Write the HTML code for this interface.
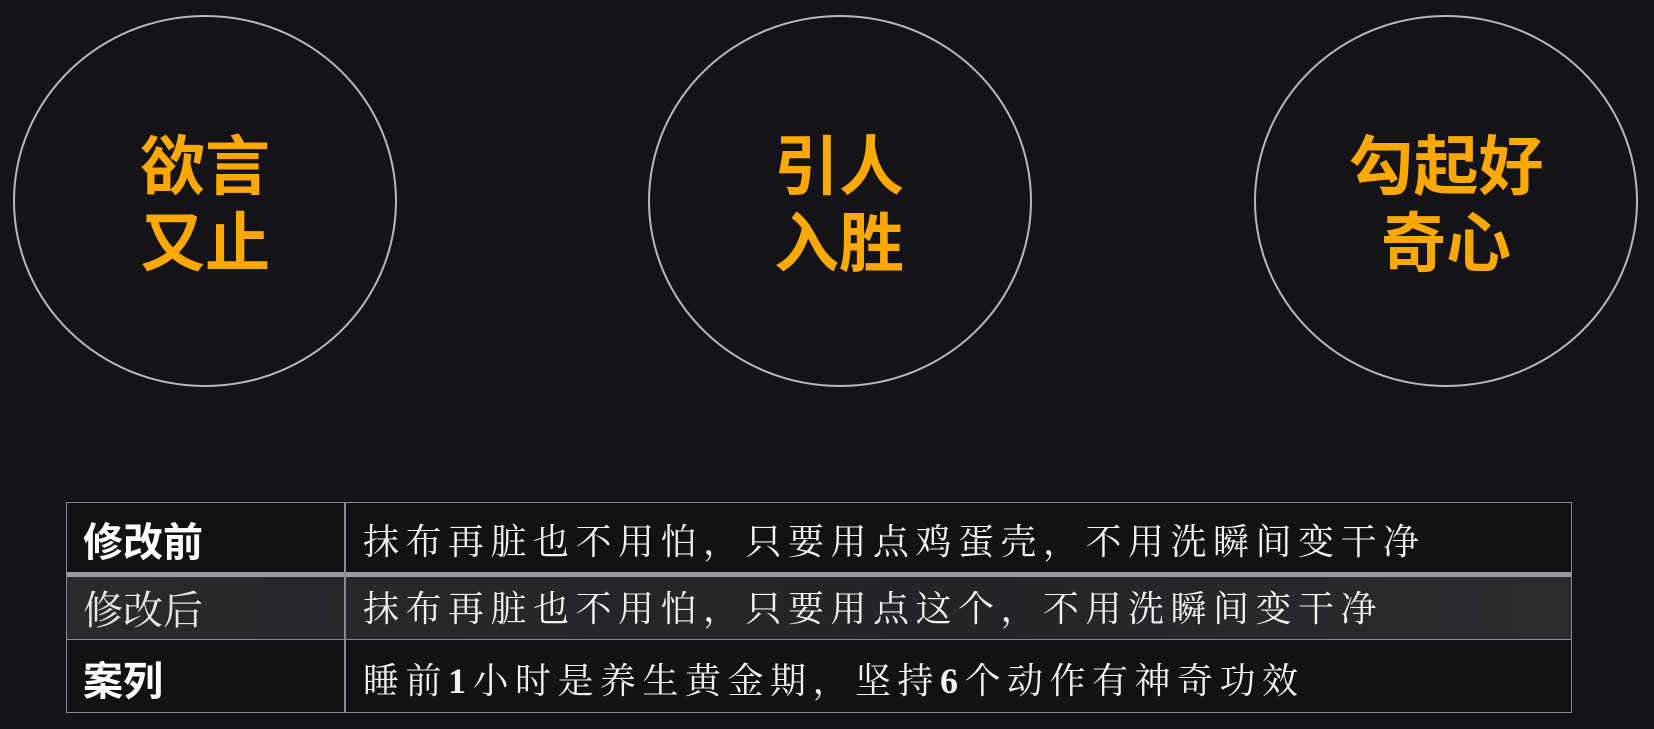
<!DOCTYPE html>
<html><head><meta charset="utf-8">
<style>
html,body{margin:0;padding:0}
body{width:1654px;height:729px;overflow:hidden;background:#141317;position:relative;font-family:"Liberation Sans","Noto Sans CJK SC",sans-serif}
.c{position:absolute;top:15px;width:384px;height:372px;border:2px solid #b8b8bd;border-radius:50%;box-sizing:border-box}
.t{position:absolute;top:128px;width:300px;text-align:center;color:#FBA800;font-weight:700;font-size:65px;line-height:77px;font-family:"Liberation Sans","Noto Sans CJK SC",sans-serif}
.tbl{position:absolute;left:66px;top:502px;width:1506px;height:211px;border:1.5px solid #8a8a8e;box-sizing:border-box}
.row{position:absolute;left:0;width:100%;box-sizing:border-box}
.l{position:absolute;left:16px;color:#fff;font-size:40px;font-weight:700;font-family:"Liberation Sans","Noto Sans CJK SC",sans-serif}
.r{position:absolute;left:296px;color:#f2f2f2;font-size:36px;letter-spacing:6.5px;white-space:nowrap;font-family:"Liberation Serif","Noto Serif CJK SC",serif}
.div{position:absolute;left:277px;top:0;bottom:0;width:1.5px;background:#8a8a8e}
</style></head><body>
<div class="c" style="left:13px"></div>
<div class="c" style="left:648px"></div>
<div class="c" style="left:1254px"></div>
<div class="t" style="left:55px">欲言<br>又止</div>
<div class="t" style="left:689px">引人<br>入胜</div>
<div class="t" style="left:1296px">勾起好<br>奇心</div>

<div class="tbl">
  <div class="row" style="top:0;height:69px;background:#121114">
    <div class="l" style="top:7px">修改前</div>
    <div class="r" style="top:11px">抹布再脏也不用怕，只要用点鸡蛋壳，不用洗瞬间变干净</div>
  </div>
  <div class="row" style="top:69px;height:5px;background:#9a9a9e"></div>
  <div class="row" style="top:74px;height:63px;background:linear-gradient(90deg,#2a2a2d,#242427 60%,#2c2c2f);border-bottom:1.5px solid #8a8a8e">
    <div class="l" style="top:2px;font-weight:400;color:#e6e6e6;font-family:'Liberation Serif','Noto Serif CJK SC',serif">修改后</div>
    <div class="r" style="top:4px">抹布再脏也不用怕，只要用点这个，不用洗瞬间变干净</div>
  </div>
  <div class="row" style="top:138px;height:71px;background:#121114">
    <div class="l" style="top:8px">案列</div>
    <div class="r" style="top:12px">睡前<b>1</b>小时是养生黄金期，坚持<b>6</b>个动作有神奇功效</div>
  </div>
  <div class="div"></div>
</div>
</body></html>
